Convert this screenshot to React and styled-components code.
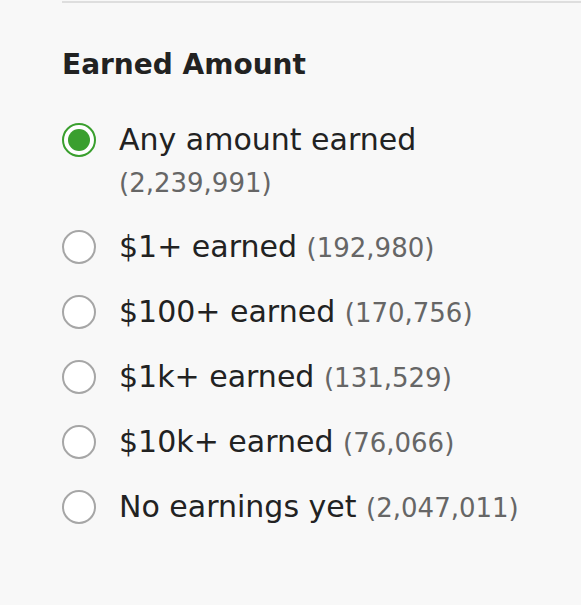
import { useState } from "react";
import styled, { createGlobalStyle } from "styled-components";

const GlobalStyle = createGlobalStyle`
  body {
    margin: 0;
    background: #f8f8f8;
    font-family: "DejaVu Sans", "Noto Sans", sans-serif;
    color: #222;
  }
`;

const Panel = styled.section`
  margin-left: 62px;
  margin-top: 1px;
  padding-right: 36px;
  border-top: 2px solid #dedede;
  padding-top: 44px;
`;

const Title = styled.h3`
  margin: 0 0 36px;
  font-size: 28px;
  font-weight: 700;
  line-height: 36px;
  color: #222;
`;

const OptionList = styled.div`
  display: flex;
  flex-direction: column;
  gap: 23px;
`;

const Option = styled.label`
  display: flex;
  align-items: flex-start;
  gap: 23px;
  cursor: pointer;
`;

const Radio = styled.span`
  flex: none;
  box-sizing: border-box;
  width: 34px;
  height: 34px;
  margin-top: 4px;
  border-radius: 50%;
  border: 2px solid ${(p) => (p.checked ? "#3a9f2e" : "#a6a6a6")};
  background: #fff;
  display: flex;
  align-items: center;
  justify-content: center;

  &::after {
    content: "";
    display: ${(p) => (p.checked ? "block" : "none")};
    width: 22px;
    height: 22px;
    border-radius: 50%;
    background: #3a9f2e;
  }
`;

const Label = styled.span`
  display: block;
  font-size: 30px;
  line-height: 42px;
`;

const Count = styled.span`
  font-size: 26px;
  line-height: 1;
  color: #666;
`;

const options = [
  { id: "any", label: "Any amount earned", count: "2,239,991" },
  { id: "1", label: "$1+ earned", count: "192,980" },
  { id: "100", label: "$100+ earned", count: "170,756" },
  { id: "1k", label: "$1k+ earned", count: "131,529" },
  { id: "10k", label: "$10k+ earned", count: "76,066" },
  { id: "none", label: "No earnings yet", count: "2,047,011" },
];

const App = () => {
  const [selected, setSelected] = useState("any");

  return (
    <>
      <GlobalStyle />
      <Panel>
        <Title>Earned Amount</Title>
        <OptionList>
          {options.map((o) => (
            <Option key={o.id} onClick={() => setSelected(o.id)}>
              <Radio checked={selected === o.id} />
              <Label>
                {o.label} <Count>({o.count})</Count>
              </Label>
            </Option>
          ))}
        </OptionList>
      </Panel>
    </>
  );
};

export default App;
